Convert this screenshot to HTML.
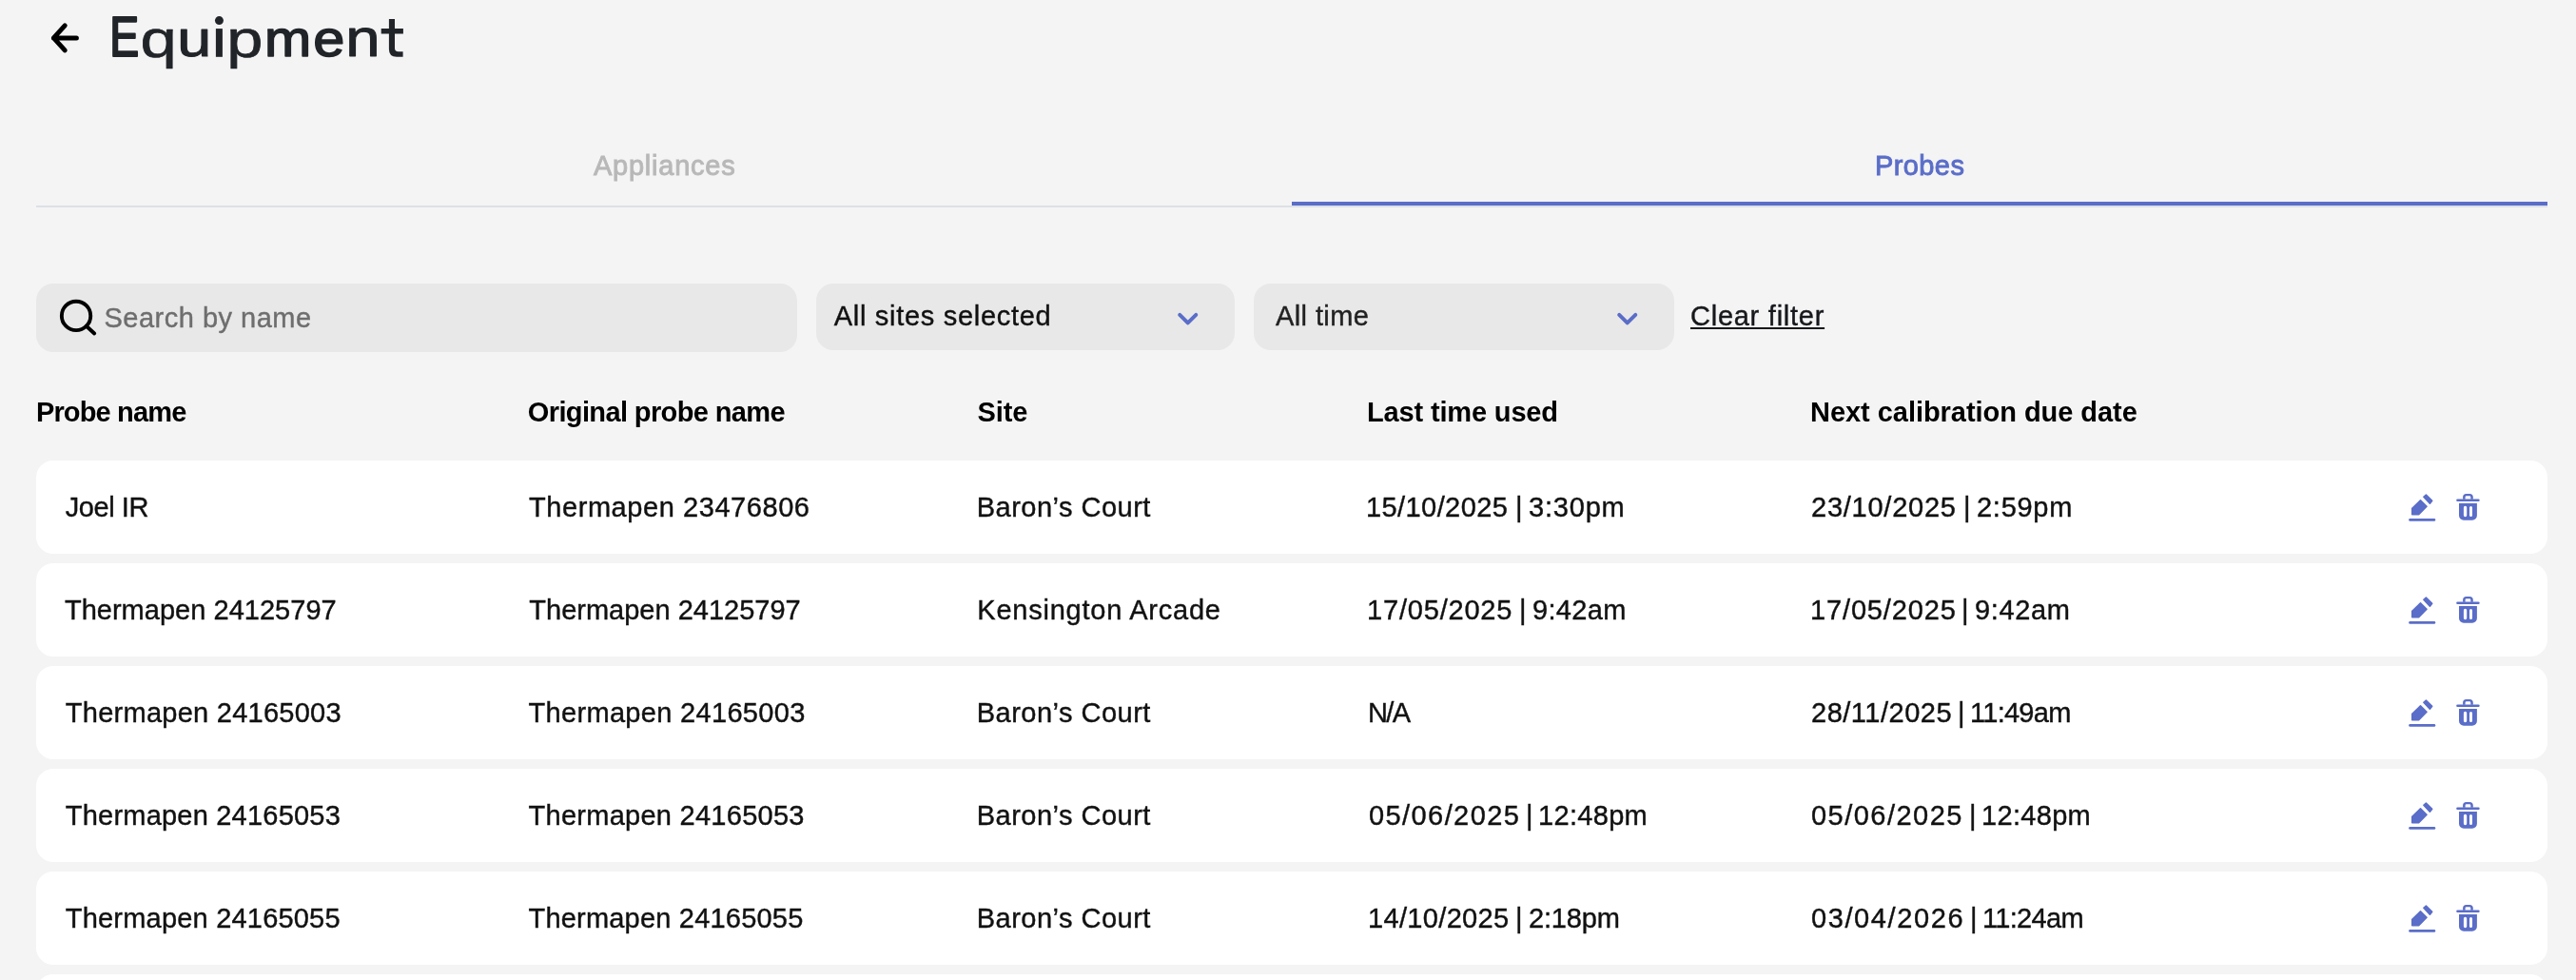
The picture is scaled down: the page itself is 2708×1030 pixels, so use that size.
<!DOCTYPE html>
<html><head><meta charset="utf-8">
<style>
*{box-sizing:border-box;margin:0;padding:0}
html,body{width:2708px;height:1030px;overflow:hidden;will-change:transform;background:#f4f4f4;font-family:"Liberation Sans",sans-serif;color:#111}
.abs{position:absolute}
.t{position:absolute;white-space:nowrap;line-height:1;-webkit-font-smoothing:antialiased}
.box{position:absolute;background:#e8e8e8;border-radius:18px}
.card{position:absolute;left:38px;width:2640px;height:98px;background:#fff;border-radius:18px}
.ic{position:absolute}
#clr{text-decoration:underline;text-decoration-thickness:2px;text-underline-offset:2px}
</style></head><body>
<svg class="abs" style="left:40px;top:10px" width="60" height="60" viewBox="0 0 60 60">
<path d="M16.4 29.9 H40.4 M28.2 16.8 L16.4 29.9 L28.2 42.9" fill="none" stroke="#000" stroke-width="5" stroke-linecap="round" stroke-linejoin="round"/>
</svg>
<div class="abs" style="left:38px;top:216px;width:2640px;height:2px;background:#dde0e5"></div>
<div class="abs" style="left:1358px;top:212px;width:1320px;height:4px;background:#5a6dc8"></div>
<div class="box" style="left:38px;top:298px;width:800px;height:72px"></div>
<svg class="abs" style="left:58px;top:310px" width="50" height="50" viewBox="0 0 50 50">
<circle cx="22.05" cy="21.95" r="15.2" fill="none" stroke="#000" stroke-width="3.9"/>
<path d="M32.8 32.7 L41.2 40.5" stroke="#000" stroke-width="3.9" stroke-linecap="round"/>
</svg>
<div class="box" style="left:858px;top:298px;width:440px;height:70px"></div>
<svg class="abs" style="left:1228px;top:318px" width="40" height="34" viewBox="0 0 40 34">
<path d="M12.2 12.9 L20.7 21.4 L29.3 12.9" fill="none" stroke="#5a6dc8" stroke-width="4" stroke-linecap="round" stroke-linejoin="round"/>
</svg>
<div class="box" style="left:1318px;top:298px;width:442px;height:70px"></div>
<svg class="abs" style="left:1690px;top:318px" width="40" height="34" viewBox="0 0 40 34">
<path d="M12.2 12.9 L20.7 21.4 L29.3 12.9" fill="none" stroke="#5a6dc8" stroke-width="4" stroke-linecap="round" stroke-linejoin="round"/>
</svg>
<div class="card" style="top:484px"><svg class="ic" style="left:2482px;top:26px" width="100" height="50" viewBox="0 0 100 50"><g fill="#5a6dc8">
<path d="M15.75 30.85 L15.75 24.3 L24.5 15.85 L31.05 22.2 L22.7 30.85 Z" stroke="#5a6dc8" stroke-width="1.5" stroke-linejoin="round"/>
<path d="M27.85 12.2 L30.4 9.95 L36.75 16.3 L34.4 19.15 Z" stroke="#5a6dc8" stroke-width="1.5" stroke-linejoin="round"/>
<rect x="12.2" y="34.9" width="28.1" height="2.9" rx="1.4"/>
<rect x="62.2" y="14.5" width="24.5" height="2.6" rx="1.3"/>
<path d="M69.1 14.8 V12.5 A3.6 3.6 0 0 1 72.7 8.9 H76.2 A3.6 3.6 0 0 1 79.8 12.5 V14.8 H77.3 V12.5 A1.2 1.2 0 0 0 76.1 11.3 H72.8 A1.2 1.2 0 0 0 71.6 12.5 V14.8 Z"/>
<path fill-rule="evenodd" d="M65 19.1 H83.9 V31.7 A5 5 0 0 1 78.9 36.7 H70 A5 5 0 0 1 65 31.7 Z M69.9 23.5 A1.6 1.6 0 0 1 73.2 23.5 V31.6 A1.6 1.6 0 0 1 69.9 31.6 Z M76 23.5 A1.5 1.5 0 0 1 79 23.5 V31.6 A1.5 1.5 0 0 1 76 31.6 Z"/>
</g></svg></div>
<div class="card" style="top:592px"><svg class="ic" style="left:2482px;top:26px" width="100" height="50" viewBox="0 0 100 50"><g fill="#5a6dc8">
<path d="M15.75 30.85 L15.75 24.3 L24.5 15.85 L31.05 22.2 L22.7 30.85 Z" stroke="#5a6dc8" stroke-width="1.5" stroke-linejoin="round"/>
<path d="M27.85 12.2 L30.4 9.95 L36.75 16.3 L34.4 19.15 Z" stroke="#5a6dc8" stroke-width="1.5" stroke-linejoin="round"/>
<rect x="12.2" y="34.9" width="28.1" height="2.9" rx="1.4"/>
<rect x="62.2" y="14.5" width="24.5" height="2.6" rx="1.3"/>
<path d="M69.1 14.8 V12.5 A3.6 3.6 0 0 1 72.7 8.9 H76.2 A3.6 3.6 0 0 1 79.8 12.5 V14.8 H77.3 V12.5 A1.2 1.2 0 0 0 76.1 11.3 H72.8 A1.2 1.2 0 0 0 71.6 12.5 V14.8 Z"/>
<path fill-rule="evenodd" d="M65 19.1 H83.9 V31.7 A5 5 0 0 1 78.9 36.7 H70 A5 5 0 0 1 65 31.7 Z M69.9 23.5 A1.6 1.6 0 0 1 73.2 23.5 V31.6 A1.6 1.6 0 0 1 69.9 31.6 Z M76 23.5 A1.5 1.5 0 0 1 79 23.5 V31.6 A1.5 1.5 0 0 1 76 31.6 Z"/>
</g></svg></div>
<div class="card" style="top:700px"><svg class="ic" style="left:2482px;top:26px" width="100" height="50" viewBox="0 0 100 50"><g fill="#5a6dc8">
<path d="M15.75 30.85 L15.75 24.3 L24.5 15.85 L31.05 22.2 L22.7 30.85 Z" stroke="#5a6dc8" stroke-width="1.5" stroke-linejoin="round"/>
<path d="M27.85 12.2 L30.4 9.95 L36.75 16.3 L34.4 19.15 Z" stroke="#5a6dc8" stroke-width="1.5" stroke-linejoin="round"/>
<rect x="12.2" y="34.9" width="28.1" height="2.9" rx="1.4"/>
<rect x="62.2" y="14.5" width="24.5" height="2.6" rx="1.3"/>
<path d="M69.1 14.8 V12.5 A3.6 3.6 0 0 1 72.7 8.9 H76.2 A3.6 3.6 0 0 1 79.8 12.5 V14.8 H77.3 V12.5 A1.2 1.2 0 0 0 76.1 11.3 H72.8 A1.2 1.2 0 0 0 71.6 12.5 V14.8 Z"/>
<path fill-rule="evenodd" d="M65 19.1 H83.9 V31.7 A5 5 0 0 1 78.9 36.7 H70 A5 5 0 0 1 65 31.7 Z M69.9 23.5 A1.6 1.6 0 0 1 73.2 23.5 V31.6 A1.6 1.6 0 0 1 69.9 31.6 Z M76 23.5 A1.5 1.5 0 0 1 79 23.5 V31.6 A1.5 1.5 0 0 1 76 31.6 Z"/>
</g></svg></div>
<div class="card" style="top:808px"><svg class="ic" style="left:2482px;top:26px" width="100" height="50" viewBox="0 0 100 50"><g fill="#5a6dc8">
<path d="M15.75 30.85 L15.75 24.3 L24.5 15.85 L31.05 22.2 L22.7 30.85 Z" stroke="#5a6dc8" stroke-width="1.5" stroke-linejoin="round"/>
<path d="M27.85 12.2 L30.4 9.95 L36.75 16.3 L34.4 19.15 Z" stroke="#5a6dc8" stroke-width="1.5" stroke-linejoin="round"/>
<rect x="12.2" y="34.9" width="28.1" height="2.9" rx="1.4"/>
<rect x="62.2" y="14.5" width="24.5" height="2.6" rx="1.3"/>
<path d="M69.1 14.8 V12.5 A3.6 3.6 0 0 1 72.7 8.9 H76.2 A3.6 3.6 0 0 1 79.8 12.5 V14.8 H77.3 V12.5 A1.2 1.2 0 0 0 76.1 11.3 H72.8 A1.2 1.2 0 0 0 71.6 12.5 V14.8 Z"/>
<path fill-rule="evenodd" d="M65 19.1 H83.9 V31.7 A5 5 0 0 1 78.9 36.7 H70 A5 5 0 0 1 65 31.7 Z M69.9 23.5 A1.6 1.6 0 0 1 73.2 23.5 V31.6 A1.6 1.6 0 0 1 69.9 31.6 Z M76 23.5 A1.5 1.5 0 0 1 79 23.5 V31.6 A1.5 1.5 0 0 1 76 31.6 Z"/>
</g></svg></div>
<div class="card" style="top:916px"><svg class="ic" style="left:2482px;top:26px" width="100" height="50" viewBox="0 0 100 50"><g fill="#5a6dc8">
<path d="M15.75 30.85 L15.75 24.3 L24.5 15.85 L31.05 22.2 L22.7 30.85 Z" stroke="#5a6dc8" stroke-width="1.5" stroke-linejoin="round"/>
<path d="M27.85 12.2 L30.4 9.95 L36.75 16.3 L34.4 19.15 Z" stroke="#5a6dc8" stroke-width="1.5" stroke-linejoin="round"/>
<rect x="12.2" y="34.9" width="28.1" height="2.9" rx="1.4"/>
<rect x="62.2" y="14.5" width="24.5" height="2.6" rx="1.3"/>
<path d="M69.1 14.8 V12.5 A3.6 3.6 0 0 1 72.7 8.9 H76.2 A3.6 3.6 0 0 1 79.8 12.5 V14.8 H77.3 V12.5 A1.2 1.2 0 0 0 76.1 11.3 H72.8 A1.2 1.2 0 0 0 71.6 12.5 V14.8 Z"/>
<path fill-rule="evenodd" d="M65 19.1 H83.9 V31.7 A5 5 0 0 1 78.9 36.7 H70 A5 5 0 0 1 65 31.7 Z M69.9 23.5 A1.6 1.6 0 0 1 73.2 23.5 V31.6 A1.6 1.6 0 0 1 69.9 31.6 Z M76 23.5 A1.5 1.5 0 0 1 79 23.5 V31.6 A1.5 1.5 0 0 1 76 31.6 Z"/>
</g></svg></div>
<div class="card" style="top:1024px"></div>
<svg class="abs" style="left:0;top:0" width="460" height="90" viewBox="0 0 460 90"><g font-family="Liberation Sans" font-size="62" fill="#212428" stroke="#212428" stroke-linejoin="round"><text transform="translate(115.20 58.80) scale(0.7469 0.9542)" stroke-width="2.351">E</text><text transform="translate(147.59 59.75) scale(1.1085 0.9073)" stroke-width="0.753">q</text><text transform="translate(186.35 59.41) scale(1.0437 0.8779)" stroke-width="1.157">u</text><rect x="226.9" y="30.1" width="7" height="29.7" stroke="none"/><circle cx="230.45" cy="21.6" r="4.5" stroke="none"/><text transform="translate(238.27 59.74) scale(1.1056 0.9075)" stroke-width="0.770">p</text><text transform="translate(277.98 59.00) scale(0.9528 0.8721)" stroke-width="1.761">m</text><text transform="translate(329.15 59.18) scale(0.9601 0.8783)" stroke-width="1.705">e</text><text transform="translate(363.29 59.27) scale(1.0532 0.8885)" stroke-width="1.092">n</text><path stroke="none" d="M408.9 20 H415 V30.1 H423.9 V35.4 H415 V50.5 Q415 54.3 418.8 54.3 H423.6 V59.8 H417 Q408.9 59.8 408.9 51.7 V35.4 H400.7 V30.1 H408.9 Z"/></g></svg>
<div class="t" id="tab1" style="left:624.00px;top:160.45px;font-size:29px;font-weight:400;color:#b8b8b8;letter-spacing:0.756px;-webkit-text-stroke:0.9px #b8b8b8">Appliances</div>
<div class="t" id="tab2" style="left:1971.00px;top:160.45px;font-size:29px;font-weight:400;color:#5a6dc8;letter-spacing:0.400px;-webkit-text-stroke:0.9px #5a6dc8">Probes</div>
<div class="t" id="ph" style="left:109.40px;top:320.15px;font-size:29px;font-weight:400;color:#6e6e6e;letter-spacing:0.508px;-webkit-text-stroke:0.4px #6e6e6e">Search by name</div>
<div class="t" id="dd1" style="left:876.70px;top:318.45px;font-size:29px;font-weight:400;color:#111111;letter-spacing:0.706px;-webkit-text-stroke:0.4px #111111">All sites selected</div>
<div class="t" id="dd2" style="left:1341.00px;top:318.45px;font-size:29px;font-weight:400;color:#222222;letter-spacing:0.400px;-webkit-text-stroke:0.4px #222222">All time</div>
<div class="t" id="clr" style="left:1777.00px;top:318.45px;font-size:29px;font-weight:400;color:#16181c;letter-spacing:0.745px;-webkit-text-stroke:0.4px #16181c">Clear filter</div>
<div class="t" id="h0" style="left:37.90px;top:419.45px;font-size:29px;font-weight:700;color:#000000;letter-spacing:-0.844px">Probe name</div>
<div class="t" id="h1" style="left:554.80px;top:419.45px;font-size:29px;font-weight:700;color:#000000;letter-spacing:-0.622px">Original probe name</div>
<div class="t" id="h2" style="left:1027.40px;top:419.45px;font-size:29px;font-weight:700;color:#000000;letter-spacing:-0.067px">Site</div>
<div class="t" id="h3" style="left:1437.00px;top:419.45px;font-size:29px;font-weight:700;color:#000000;letter-spacing:-0.154px">Last time used</div>
<div class="t" id="h4" style="left:1903.00px;top:419.45px;font-size:29px;font-weight:700;color:#000000;letter-spacing:-0.042px">Next calibration due date</div>
<div class="t" id="r0c0" style="left:68.70px;top:519.45px;font-size:29px;font-weight:400;color:#111111;letter-spacing:-0.433px;-webkit-text-stroke:0.4px #111111">Joel IR</div>
<div class="t" id="r0c1" style="left:556.00px;top:519.45px;font-size:29px;font-weight:400;color:#111111;letter-spacing:0.565px;-webkit-text-stroke:0.4px #111111">Thermapen 23476806</div>
<div class="t" id="r0c2" style="left:1026.80px;top:519.45px;font-size:29px;font-weight:400;color:#111111;letter-spacing:0.483px;-webkit-text-stroke:0.4px #111111">Baron’s Court</div>
<div class="t" id="r0c3d" style="left:1436.00px;top:519.45px;font-size:29px;font-weight:400;color:#111111;letter-spacing:0.411px;-webkit-text-stroke:0.4px #111111">15/10/2025</div>
<div class="t" id="r0c3p" style="left:1593.00px;top:519.45px;font-size:29px;font-weight:400;color:#111111;letter-spacing:0.000px;-webkit-text-stroke:0.4px #111111">|</div>
<div class="t" id="r0c3t" style="left:1607.00px;top:519.45px;font-size:29px;font-weight:400;color:#111111;letter-spacing:0.800px;-webkit-text-stroke:0.4px #111111">3:30pm</div>
<div class="t" id="r0c4d" style="left:1904.00px;top:519.45px;font-size:29px;font-weight:400;color:#111111;letter-spacing:0.756px;-webkit-text-stroke:0.4px #111111">23/10/2025</div>
<div class="t" id="r0c4p" style="left:2064.00px;top:519.45px;font-size:29px;font-weight:400;color:#111111;letter-spacing:0.000px;-webkit-text-stroke:0.4px #111111">|</div>
<div class="t" id="r0c4t" style="left:2078.00px;top:519.45px;font-size:29px;font-weight:400;color:#111111;letter-spacing:0.720px;-webkit-text-stroke:0.4px #111111">2:59pm</div>
<div class="t" id="r1c0" style="left:67.90px;top:627.45px;font-size:29px;font-weight:400;color:#111111;letter-spacing:0.024px;-webkit-text-stroke:0.4px #111111">Thermapen 24125797</div>
<div class="t" id="r1c1" style="left:556.30px;top:627.45px;font-size:29px;font-weight:400;color:#111111;letter-spacing:-0.000px;-webkit-text-stroke:0.4px #111111">Thermapen 24125797</div>
<div class="t" id="r1c2" style="left:1027.30px;top:627.45px;font-size:29px;font-weight:400;color:#111111;letter-spacing:0.763px;-webkit-text-stroke:0.4px #111111">Kensington Arcade</div>
<div class="t" id="r1c3d" style="left:1437.00px;top:627.45px;font-size:29px;font-weight:400;color:#111111;letter-spacing:0.811px;-webkit-text-stroke:0.4px #111111">17/05/2025</div>
<div class="t" id="r1c3p" style="left:1597.00px;top:627.45px;font-size:29px;font-weight:400;color:#111111;letter-spacing:0.000px;-webkit-text-stroke:0.4px #111111">|</div>
<div class="t" id="r1c3t" style="left:1611.00px;top:627.45px;font-size:29px;font-weight:400;color:#111111;letter-spacing:0.340px;-webkit-text-stroke:0.4px #111111">9:42am</div>
<div class="t" id="r1c4d" style="left:1903.00px;top:627.45px;font-size:29px;font-weight:400;color:#111111;letter-spacing:0.856px;-webkit-text-stroke:0.4px #111111">17/05/2025</div>
<div class="t" id="r1c4p" style="left:2062.00px;top:627.45px;font-size:29px;font-weight:400;color:#111111;letter-spacing:0.000px;-webkit-text-stroke:0.4px #111111">|</div>
<div class="t" id="r1c4t" style="left:2076.00px;top:627.45px;font-size:29px;font-weight:400;color:#111111;letter-spacing:0.660px;-webkit-text-stroke:0.4px #111111">9:42am</div>
<div class="t" id="r2c0" style="left:68.80px;top:735.45px;font-size:29px;font-weight:400;color:#111111;letter-spacing:0.259px;-webkit-text-stroke:0.4px #111111">Thermapen 24165003</div>
<div class="t" id="r2c1" style="left:555.50px;top:735.45px;font-size:29px;font-weight:400;color:#111111;letter-spacing:0.318px;-webkit-text-stroke:0.4px #111111">Thermapen 24165003</div>
<div class="t" id="r2c2" style="left:1026.80px;top:735.45px;font-size:29px;font-weight:400;color:#111111;letter-spacing:0.483px;-webkit-text-stroke:0.4px #111111">Baron’s Court</div>
<div class="t" id="r2c3" style="left:1437.90px;top:735.45px;font-size:29px;font-weight:400;color:#111111;letter-spacing:-1.600px;-webkit-text-stroke:0.4px #111111">N/A</div>
<div class="t" id="r2c4d" style="left:1904.00px;top:735.45px;font-size:29px;font-weight:400;color:#111111;letter-spacing:0.511px;-webkit-text-stroke:0.4px #111111">28/11/2025</div>
<div class="t" id="r2c4p" style="left:2058.00px;top:735.45px;font-size:29px;font-weight:400;color:#111111;letter-spacing:0.000px;-webkit-text-stroke:0.4px #111111">|</div>
<div class="t" id="r2c4t" style="left:2071.00px;top:735.45px;font-size:29px;font-weight:400;color:#111111;letter-spacing:-0.733px;-webkit-text-stroke:0.4px #111111">11:49am</div>
<div class="t" id="r3c0" style="left:68.80px;top:843.45px;font-size:29px;font-weight:400;color:#111111;letter-spacing:0.212px;-webkit-text-stroke:0.4px #111111">Thermapen 24165053</div>
<div class="t" id="r3c1" style="left:555.50px;top:843.45px;font-size:29px;font-weight:400;color:#111111;letter-spacing:0.271px;-webkit-text-stroke:0.4px #111111">Thermapen 24165053</div>
<div class="t" id="r3c2" style="left:1026.80px;top:843.45px;font-size:29px;font-weight:400;color:#111111;letter-spacing:0.483px;-webkit-text-stroke:0.4px #111111">Baron’s Court</div>
<div class="t" id="r3c3d" style="left:1439.00px;top:843.45px;font-size:29px;font-weight:400;color:#111111;letter-spacing:1.411px;-webkit-text-stroke:0.4px #111111">05/06/2025</div>
<div class="t" id="r3c3p" style="left:1604.00px;top:843.45px;font-size:29px;font-weight:400;color:#111111;letter-spacing:0.000px;-webkit-text-stroke:0.4px #111111">|</div>
<div class="t" id="r3c3t" style="left:1617.00px;top:843.45px;font-size:29px;font-weight:400;color:#111111;letter-spacing:0.317px;-webkit-text-stroke:0.4px #111111">12:48pm</div>
<div class="t" id="r3c4d" style="left:1904.00px;top:843.45px;font-size:29px;font-weight:400;color:#111111;letter-spacing:1.478px;-webkit-text-stroke:0.4px #111111">05/06/2025</div>
<div class="t" id="r3c4p" style="left:2070.00px;top:843.45px;font-size:29px;font-weight:400;color:#111111;letter-spacing:0.000px;-webkit-text-stroke:0.4px #111111">|</div>
<div class="t" id="r3c4t" style="left:2083.00px;top:843.45px;font-size:29px;font-weight:400;color:#111111;letter-spacing:0.317px;-webkit-text-stroke:0.4px #111111">12:48pm</div>
<div class="t" id="r4c0" style="left:68.80px;top:951.45px;font-size:29px;font-weight:400;color:#111111;letter-spacing:0.200px;-webkit-text-stroke:0.4px #111111">Thermapen 24165055</div>
<div class="t" id="r4c1" style="left:555.50px;top:951.45px;font-size:29px;font-weight:400;color:#111111;letter-spacing:0.200px;-webkit-text-stroke:0.4px #111111">Thermapen 24165055</div>
<div class="t" id="r4c2" style="left:1026.80px;top:951.45px;font-size:29px;font-weight:400;color:#111111;letter-spacing:0.483px;-webkit-text-stroke:0.4px #111111">Baron’s Court</div>
<div class="t" id="r4c3d" style="left:1438.00px;top:951.45px;font-size:29px;font-weight:400;color:#111111;letter-spacing:0.333px;-webkit-text-stroke:0.4px #111111">14/10/2025</div>
<div class="t" id="r4c3p" style="left:1593.00px;top:951.45px;font-size:29px;font-weight:400;color:#111111;letter-spacing:0.000px;-webkit-text-stroke:0.4px #111111">|</div>
<div class="t" id="r4c3t" style="left:1607.00px;top:951.45px;font-size:29px;font-weight:400;color:#111111;letter-spacing:-0.160px;-webkit-text-stroke:0.4px #111111">2:18pm</div>
<div class="t" id="r4c4d" style="left:1904.00px;top:951.45px;font-size:29px;font-weight:400;color:#111111;letter-spacing:1.600px;-webkit-text-stroke:0.4px #111111">03/04/2026</div>
<div class="t" id="r4c4p" style="left:2071.00px;top:951.45px;font-size:29px;font-weight:400;color:#111111;letter-spacing:0.000px;-webkit-text-stroke:0.4px #111111">|</div>
<div class="t" id="r4c4t" style="left:2084.00px;top:951.45px;font-size:29px;font-weight:400;color:#111111;letter-spacing:-0.683px;-webkit-text-stroke:0.4px #111111">11:24am</div>
</body></html>
